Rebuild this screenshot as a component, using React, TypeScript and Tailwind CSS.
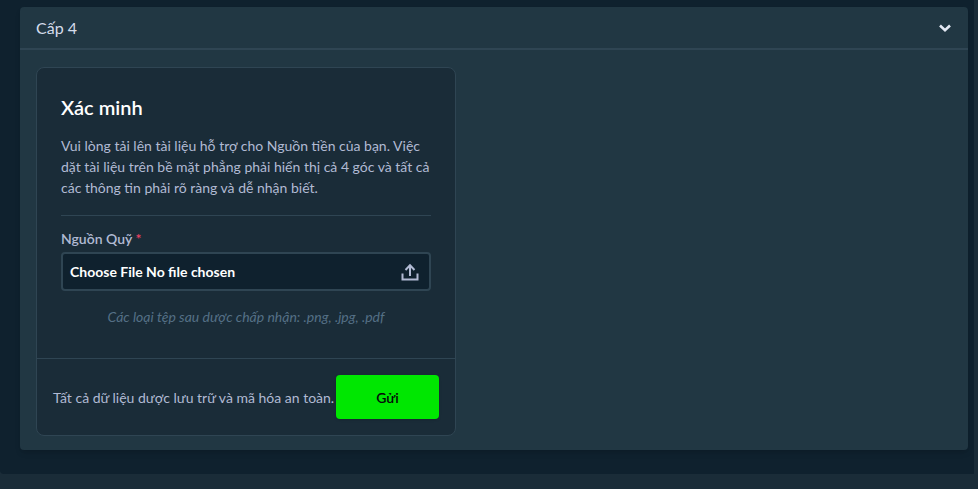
import React from "react";

const font = { };

export default function App() {
  return (
    <div className="h-[489px] w-[978px] overflow-hidden bg-[#1a2c38] font-['Lato','Liberation_Sans',sans-serif]">
      <div className="h-[474px] w-[974px] rounded-bl-[4px] bg-[#0f212e] pt-[7px] pl-[20px] pr-[6px]">
        <section className="h-[443px] rounded-[4px] bg-[#213743] shadow-md">
          <header className="flex h-[41px] items-center justify-between border-b-2 border-[#2f4553] box-content pl-[16px] pr-[17px]">
            <h2 className="text-[16px] text-[#d5dceb]">Cấp 4</h2>
            <svg viewBox="0 0 12 8" className="h-[8px] w-[12px]" fill="none" stroke="#e3e8f3" strokeWidth="2.6">
              <path d="M1 1.5 6 6.2 11 1.5" />
            </svg>
          </header>
          <div className="pt-[17px] pl-[16px]">
            <div className="flex h-[369px] w-[420px] flex-col rounded-[8px] border border-[#2f4553] bg-[#1a2c38]">
              <div className="flex-1 px-[24px] pt-[25px]">
                <h3 className="text-[20px] leading-[28px] font-semibold text-white">Xác minh</h3>
                <p className="mt-[14px] text-[14px] leading-[21px] text-[#b1bad3]">
                  Vui lòng tải lên tài liệu hỗ trợ cho Nguồn tiền của bạn. Việc dặt tài liệu trên bề mặt phẳng phải hiển thị cả 4 góc và tất cả các thông tin phải rõ ràng và dễ nhận biết.
                </p>
                <div className="mt-[17px] h-px bg-[#2f4553]" />
                <label className="mt-[13px] block text-[14px] leading-[20px] font-semibold text-[#b1bad3]">
                  Nguồn Quỹ <span className="text-[#ed4163]">*</span>
                </label>
                <div className="mt-[3px] flex h-[39px] items-center justify-between rounded-[4px] border-2 border-[#2f4553] bg-[#0f212e] pl-[7px] pr-[10px]">
                  <span className="text-[14px] font-bold text-white">Choose File No file chosen</span>
                  <svg viewBox="0 0 18 18" className="h-[18px] w-[18px]" fill="none" stroke="#b1bad3" strokeWidth="2">
                    <path d="M9 13V3M4.5 7 9 2.2 13.5 7" />
                    <path d="M1.500 10.500V16.500H16.500V10.500" />
                  </svg>
                </div>
                <p className="mt-[16px] text-center text-[14px] leading-[20px] text-[#557086] italic">
                  Các loại tệp sau dược chấp nhận: .png, .jpg, .pdf
                </p>
              </div>
              <footer className="flex h-[77px] items-center border-t border-[#2f4553] pr-[16px] pl-[16px]">
                <span className="flex-1 text-[14px] whitespace-nowrap text-[#b1bad3]">Tất cả dữ liệu dược lưu trữ và mã hóa an toàn.</span>
                <button className="h-[44px] w-[103px] rounded-[4px] bg-[#00e701] text-[14px] font-semibold text-[#05080a] shadow-sm">Gửi</button>
              </footer>
            </div>
          </div>
        </section>
      </div>
    </div>
  );
}
